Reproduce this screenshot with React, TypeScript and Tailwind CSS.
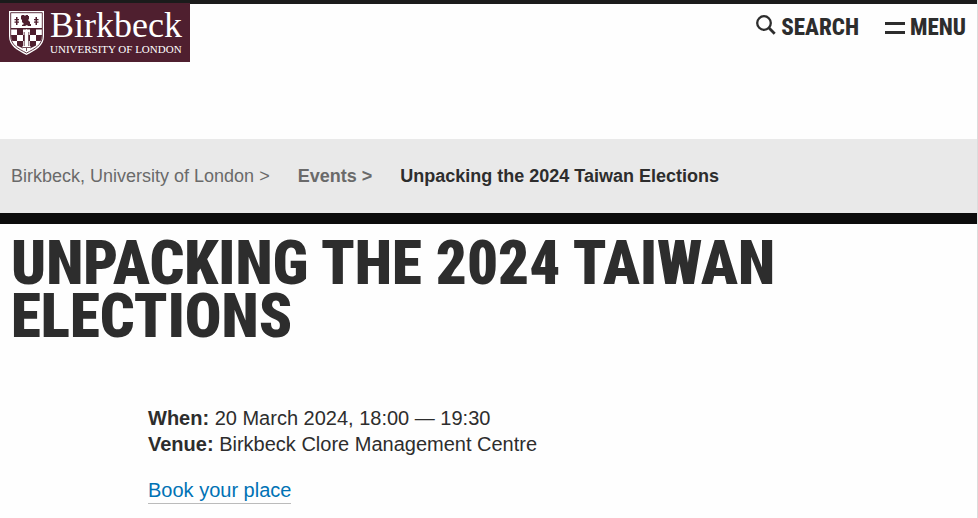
function Crest() {
  return (
    <svg viewBox="0 0 35 44" className="h-11 w-[35px] shrink-0" aria-hidden="true">
      <path d="M0 0H35V25C35 35 27 39 17.500 44C8 39 0 35 0 25Z" fill="#fff" />
      <path d="M1.700 1.700H33.300V25C33.300 34 26 37.500 17.500 42C9 37.500 1.700 34 1.700 25Z" fill="none" stroke="#4f1f2f" strokeWidth="0.900" />
      <g fill="#4f1f2f">
        <path d="M13 4h2.500v1h1V4H19v1h1v3l-1 1 2 2v2h1v2h-3l-1-1-2 1h-3v-1l2-1-2-2v-2l-1-1V5Z" />
        <path d="M7 6h1.500v2H10v1.300H8.500v1.200H10v1.200H8.500V14H7v-2.300H5.500v-1.200H7V9.300H5.500V8H7Z" />
        <path d="M26.500 6H28v2h1.500v1.300H28v1.200h1.500v1.200H28V14h-1.500v-2.300H25v-1.200h1.500V9.300H25V8h1.500Z" />
        <path d="M2 17h31v1.500H2Z" />
        <path d="M8 18h6v6H8ZM21 18h6v6h-6ZM2 24h6v6H3.500Q2 28 2 24ZM27 24h6q0 4-1.500 6H27ZM14 24h2v6h-2ZM19 24h2v6h-2ZM8 30h6v7.500L8 34.500ZM21 30h6v4.500l-6 3Z" />
      </g>
      <path d="M17.500 18l2 3v14h2v2h-2.600v4h-2.800v-4h-2.600v-2h2V21Z" fill="#fff" />
      <path d="M15.200 21v14M19.800 21v14M13.500 36.500h8M17.500 37v3" stroke="#4f1f2f" strokeWidth="0.800" />
    </svg>
  );
}

function SearchIcon() {
  return (
    <svg viewBox="0 0 20 20" className="size-5" fill="none" stroke="#2d2d2d" aria-hidden="true">
      <circle cx="8" cy="8" r="6.800" strokeWidth="2.300" />
      <path d="M12.800 12.800L18.700 18.700" strokeWidth="2.800" />
    </svg>
  );
}

export default function App() {
  return (
    <div className="min-h-screen border-r border-[#dcdcdc] bg-[#fefefe] font-['Liberation_Sans',Arial,sans-serif] text-[#2d2d2d]">
      <header className="flex h-[139px] items-start justify-between border-t-4 border-[#1b1b1b]">
        <a
          href="#home"
          aria-label="Birkbeck, University of London"
          className="-mt-px flex h-[59px] w-[190px] items-center gap-1.5 bg-[#4f1f2f] pl-[9px] font-['Liberation_Serif',serif] text-white"
        >
          <Crest />
          <span className="flex flex-col pb-1 whitespace-nowrap">
            <span className="text-[36px] leading-9">Birkbeck</span>
            <span className="text-[11px] leading-3">UNIVERSITY OF LONDON</span>
          </span>
        </a>
        <div className="flex items-center gap-[26px] pt-[11px] pr-[11px] font-['Roboto_Condensed','Liberation_Sans_Narrow',Roboto,sans-serif] text-[23px] leading-[26px] font-extrabold">
          <button type="button" className="flex gap-[5px]">
            <SearchIcon />
            <span>SEARCH</span>
          </button>
          <button type="button" className="flex items-center gap-[5px]">
            <span className="h-3 w-5 border-y-[3px] border-[#2d2d2d]" />
            <span>MENU</span>
          </button>
        </div>
      </header>
      <nav aria-label="Breadcrumb" className="border-b-[11px] border-[#0c0c0c] bg-[#e9e9e9] px-[11px] py-[25px]">
        <ol className="flex gap-7 text-[18px] leading-6 text-[#6a6a6a]">
          <li>
            <a href="#home">Birkbeck, University of London</a> &gt;
          </li>
          <li className="font-bold">
            <a href="#events">Events</a> &gt;
          </li>
          <li className="font-bold text-[#2d2d2d]" aria-current="page">
            Unpacking the 2024 Taiwan Elections
          </li>
        </ol>
      </nav>
      <main>
        <h1 className="px-[11px] pt-[13px] font-['Roboto_Condensed','Liberation_Sans_Narrow',Roboto,sans-serif] text-[61px] leading-[53px] font-black">
          UNPACKING THE 2024 TAIWAN ELECTIONS
        </h1>
        <div className="mt-[62px] pr-3 pl-[148px] text-[20px] leading-[26px]">
          <p>
            <strong>When:</strong> 20 March 2024, 18:00 — 19:30
          </p>
          <p>
            <strong>Venue:</strong> Birkbeck Clore Management Centre
          </p>
          <a href="#book" className="mt-[21px] inline-block border-b border-[#bbb] leading-[25px] text-[#0072b5]">
            Book your place
          </a>
        </div>
      </main>
    </div>
  );
}
